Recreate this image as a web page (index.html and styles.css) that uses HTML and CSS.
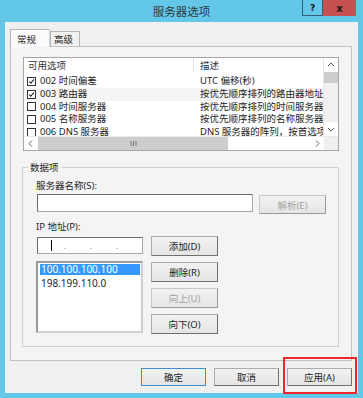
FILE: index.html
```
<!DOCTYPE html>
<html lang="zh-CN">
<head>
    <meta charset="UTF-8">
    <title>服务器选项</title>
    <link rel="stylesheet" href="styles.css">
</head>
<body>
    <div class="window">
        <!-- Заголовок окна -->
        <div class="titlebar">
            <span></span>
            <span class="title">服务器选项</span>
            <div class="caption">
                <span class="cap help">?</span>
                <span class="cap close">x</span>
            </div>
        </div>

        <div class="client">
            <!-- Вкладки -->
            <div class="tabs">
                <span class="tab active">常规</span>
                <span class="tab">高级</span>
            </div>

            <div class="panel">
                <!-- Список опций -->
                <div class="listview">
                    <div class="lv-top">
                        <div class="lv-body">
                            <div class="lv-header">
                                <span class="col1">可用选项</span>
                                <span class="col2">描述</span>
                            </div>
                            <div class="lv-row">
                                <span class="col1"><span class="chk on"><svg viewBox="0 0 9 9"><path d="M1.6 4.6 L3.6 6.6 L7.6 1.8" fill="none" stroke="#222" stroke-width="1.3"/></svg></span>002 时间偏差</span>
                                <span class="col2">UTC 偏移(秒)</span>
                            </div>
                            <div class="lv-row hot">
                                <span class="col1"><span class="chk on"><svg viewBox="0 0 9 9"><path d="M1.6 4.6 L3.6 6.6 L7.6 1.8" fill="none" stroke="#222" stroke-width="1.3"/></svg></span>003 路由器</span>
                                <span class="col2">按优先顺序排列的路由器地址阵列</span>
                            </div>
                            <div class="lv-row">
                                <span class="col1"><span class="chk"></span>004 时间服务器</span>
                                <span class="col2">按优先顺序排列的时间服务器地址</span>
                            </div>
                            <div class="lv-row">
                                <span class="col1"><span class="chk"></span>005 名称服务器</span>
                                <span class="col2">按优先顺序排列的名称服务器 [</span>
                            </div>
                            <div class="lv-row">
                                <span class="col1"><span class="chk"></span>006 DNS 服务器</span>
                                <span class="col2">DNS 服务器的阵列，按首选项排</span>
                            </div>
                        </div>
                        <div class="vscroll">
                            <span class="arrow"><svg viewBox="0 0 14 14"><path d="M4 8 L7 5 L10 8" fill="none" stroke="#606060" stroke-width="1"/></svg></span>
                            <span class="vthumb"></span>
                            <span class="vtrack"></span>
                            <span class="arrow"><svg viewBox="0 0 14 14"><path d="M4 6 L7 9 L10 6" fill="none" stroke="#606060" stroke-width="1"/></svg></span>
                        </div>
                    </div>
                    <div class="hscroll">
                        <span class="harrow"><svg viewBox="0 0 14 13"><path d="M8 3.5 L5 6.5 L8 9.5" fill="none" stroke="#606060" stroke-width="1"/></svg></span>
                        <span class="hthumb"><svg viewBox="0 0 7 5"><path d="M1 0 V5 M3.5 0 V5 M6 0 V5" stroke="#777" stroke-width="1"/></svg></span>
                        <span class="htrack"></span>
                        <span class="harrow"><svg viewBox="0 0 14 13"><path d="M6 3.5 L9 6.5 L6 9.5" fill="none" stroke="#606060" stroke-width="1"/></svg></span>
                        <span class="corner"></span>
                    </div>
                </div>

                <!-- Элемент данных -->
                <fieldset class="group">
                    <legend>数据项</legend>
                    <div class="label">服务器名称(S):</div>
                    <div class="name-row">
                        <span class="field name-field"></span>
                        <span class="btn disabled">解析(E)</span>
                    </div>
                    <div class="label ip-label">IP 地址(P):</div>
                    <div class="ip-row">
                        <div class="ip-left">
                            <span class="field ip-field">
                                <span class="caret"></span>
                                <span class="dot">.</span>
                                <span class="dot">.</span>
                                <span class="dot">.</span>
                            </span>
                            <div class="listbox">
                                <div class="item selected">100.100.100.100</div>
                                <div class="item">198.199.110.0</div>
                            </div>
                        </div>
                        <div class="ip-btns">
                            <span class="btn">添加(D)</span>
                            <span class="btn">删除(R)</span>
                            <span class="btn disabled">向上(U)</span>
                            <span class="btn">向下(O)</span>
                        </div>
                    </div>
                </fieldset>
            </div>

            <!-- Кнопки диалога -->
            <div class="dialog-btns">
                <span class="btn default">确定</span>
                <span class="btn">取消</span>
                <span class="btn">应用(A)</span>
            </div>
        </div>

        <!-- Красная рамка поверх кнопки -->
        <div class="highlight"></div>
    </div>
</body>
</html>
```
FILE: styles.css
```
body {
    margin: 0;
    padding: 0;
    font-family: "Noto Sans", "Noto Sans CJK SC", sans-serif;
    font-size: 9.5px;
    color: #1e1e1e;
}

.window {
    position: relative;
    width: 363px;
    height: 398px;
    background: #63c8e8;
    box-sizing: border-box;
    padding: 0 5px 5px 5px;
    display: flex;
    flex-direction: column;
}

/* заголовок */
.titlebar {
    height: 22px;
    margin: 0 -5px;
    padding: 0 7px;
    display: grid;
    grid-template-columns: 1fr auto 1fr;
    align-items: start;
}

.title {
    font-size: 11.5px;
    line-height: 24px;
    color: #2a3a40;
}

.caption {
    justify-self: end;
    display: flex;
}

.cap {
    height: 16px;
    box-sizing: border-box;
    display: flex;
    align-items: center;
    justify-content: center;
    font-family: "DejaVu Sans", sans-serif;
    font-weight: bold;
    font-size: 9px;
}

.help {
    width: 21px;
    border: 1px solid #2f5f70;
    border-top: none;
    color: #111;
}

.close {
    width: 33px;
    background: #c75050;
    color: #1a1a1a;
    font-size: 10px;
}

.client {
    flex: 1;
    background: #f0f0f0;
    padding: 7px 6px 0 5px;
    display: flex;
    flex-direction: column;
}

/* вкладки */
.tabs {
    display: flex;
    align-items: flex-end;
    height: 18px;
    margin-bottom: -1px;
    position: relative;
    z-index: 1;
}

.tab {
    height: 15px;
    box-sizing: border-box;
    border: 1px solid #b4b4b4;
    border-bottom: none;
    padding: 0 6px 0 3px;
    line-height: 15px;
    background: #f0f0f0;
    margin-bottom: 1px;
}

.tab.active {
    height: 18px;
    width: 40px;
    background: #fbfbfb;
    line-height: 20px;
    padding-left: 6px;
    margin-bottom: 0;
    border-right: 1px solid #cfcfcf;
}

.panel {
    height: 315px;
    box-sizing: border-box;
    border: 1px solid #c3c3c3;
    background: #f4f4f4;
    padding: 10px 12px 0 12px;
}

/* список */
.listview {
    height: 94px;
    box-sizing: border-box;
    border: 1px solid #a6a6a6;
    background: #fff;
    display: flex;
    flex-direction: column;
}

.lv-top {
    flex: 1;
    min-height: 0;
    display: flex;
    overflow: hidden;
}

.lv-body {
    flex: 1;
    min-width: 0;
    overflow: hidden;
}

.lv-header {
    height: 15px;
    display: flex;
    line-height: 15px;
    color: #333;
    margin-bottom: 2px;
}

.lv-header .col1 {
    border-right: 1px solid #e2e2e2;
    box-sizing: border-box;
}

.col1 {
    width: 170px;
    flex: none;
    padding-left: 4px;
    box-sizing: border-box;
    display: flex;
    align-items: center;
    white-space: nowrap;
}

.col2 {
    padding-left: 6px;
    white-space: nowrap;
    overflow: hidden;
}

.lv-row {
    height: 12.8px;
    line-height: 12.8px;
    display: flex;
}

.lv-row .col1 {
    padding-left: 3px;
}

.lv-row.hot {
    background: #f5f5f5;
}

.chk {
    width: 9px;
    height: 9px;
    box-sizing: border-box;
    border: 1px solid #333;
    background: #fff;
    margin-right: 4px;
    display: flex;
}

.chk svg {
    width: 7px;
    height: 7px;
}

.vscroll {
    width: 14px;
    flex: none;
    display: flex;
    flex-direction: column;
    background: #f0f0f0;
    border-left: 1px solid #e6e6e6;
}

.arrow {
    height: 14px;
    background: #fff;
    display: flex;
}

.arrow svg,
.harrow svg {
    width: 100%;
    height: 100%;
}

.vthumb {
    height: 11px;
    background: #cdcdcd;
}

.vtrack {
    flex: 1;
    background: #f0f0f0;
}

.hscroll {
    height: 13px;
    flex: none;
    display: flex;
    border-top: 1px solid #eaeaea;
}

.harrow {
    width: 14px;
    display: flex;
}

.hthumb {
    width: 190px;
    background: #cdcdcd;
    display: flex;
    align-items: center;
    justify-content: center;
}

.hthumb svg {
    width: 7px;
    height: 5px;
}

.htrack {
    flex: 1;
    background: #fff;
}

.corner {
    width: 14px;
    background: #f0f0f0;
}

/* группа */
.group {
    margin: 10px 0 0 -1px;
    padding: 5px 12px 0 13px;
    height: 186px;
    box-sizing: border-box;
    border: 1px solid #cfcfcf;
    min-width: 0;
}

.group legend {
    padding: 0 2px;
    margin-left: -8px;
    line-height: 13px;
}

.label {
    line-height: 13px;
    height: 13px;
    margin-bottom: 2px;
}

.field {
    display: block;
    height: 18px;
    box-sizing: border-box;
    background: #fff;
    border: 1px solid #a8a8a8;
    border-top-color: #6a6a6a;
    border-left-color: #6a6a6a;
}

.name-row {
    display: flex;
    gap: 6px;
    margin-left: 1px;
}

.name-field {
    width: 216px;
}

.btn {
    display: flex;
    align-items: center;
    justify-content: center;
    width: 67px;
    height: 19px;
    box-sizing: border-box;
    border: 1px solid #acacac;
    border-right-color: #707070;
    border-bottom-color: #707070;
    background: linear-gradient(#f2f2f2, #e5e5e5);
    color: #1e1e1e;
}

.name-row .btn {
    margin-top: 1px;
}

.btn.disabled {
    color: #a0a0a0;
    border-color: #c8c8c8;
    border-right-color: #9a9a9a;
    border-bottom-color: #9a9a9a;
}

.ip-label {
    margin-top: 6px;
    margin-bottom: 3px;
}

.ip-row {
    display: flex;
    gap: 8px;
}

.ip-left {
    width: 107px;
    display: flex;
    flex-direction: column;
    gap: 7px;
    padding-top: 1px;
}

.ip-field {
    width: 106px;
    margin-left: 1px;
    height: 17px;
    display: flex;
    align-items: center;
    padding-left: 13px;
    gap: 0;
}

.caret {
    width: 1px;
    height: 11px;
    background: #000;
    margin-right: 12px;
}

.dot {
    width: 26px;
    color: #777;
    line-height: 8px;
    font-size: 8px;
}

.listbox {
    height: 72px;
    box-sizing: border-box;
    border: 2px solid #9a9a9a;
    border-right-color: #cfcfcf;
    border-bottom-color: #cfcfcf;
    background: #fff;
    padding: 1px 1px 0 2px;
}

.item {
    height: 10.5px;
    line-height: 10.5px;
    font-size: 10px;
    padding-left: 1px;
    margin-bottom: 3px;
}

.item.selected {
    background: #3399ff;
    color: #fff;
}

.ip-btns {
    display: flex;
    flex-direction: column;
    gap: 6px;
}

.ip-btns .btn {
    height: 20px;
}

/* кнопки диалога */
.dialog-btns {
    display: flex;
    justify-content: flex-end;
    gap: 8px;
    margin-top: 7px;
}

.dialog-btns .btn {
    width: 65px;
    height: 18px;
}

.btn.default {
    border-color: #3c8fd6;
}

.highlight {
    position: absolute;
    left: 283px;
    top: 357px;
    width: 74px;
    height: 37px;
    box-sizing: border-box;
    border: 2px solid #f0262d;
}
```
